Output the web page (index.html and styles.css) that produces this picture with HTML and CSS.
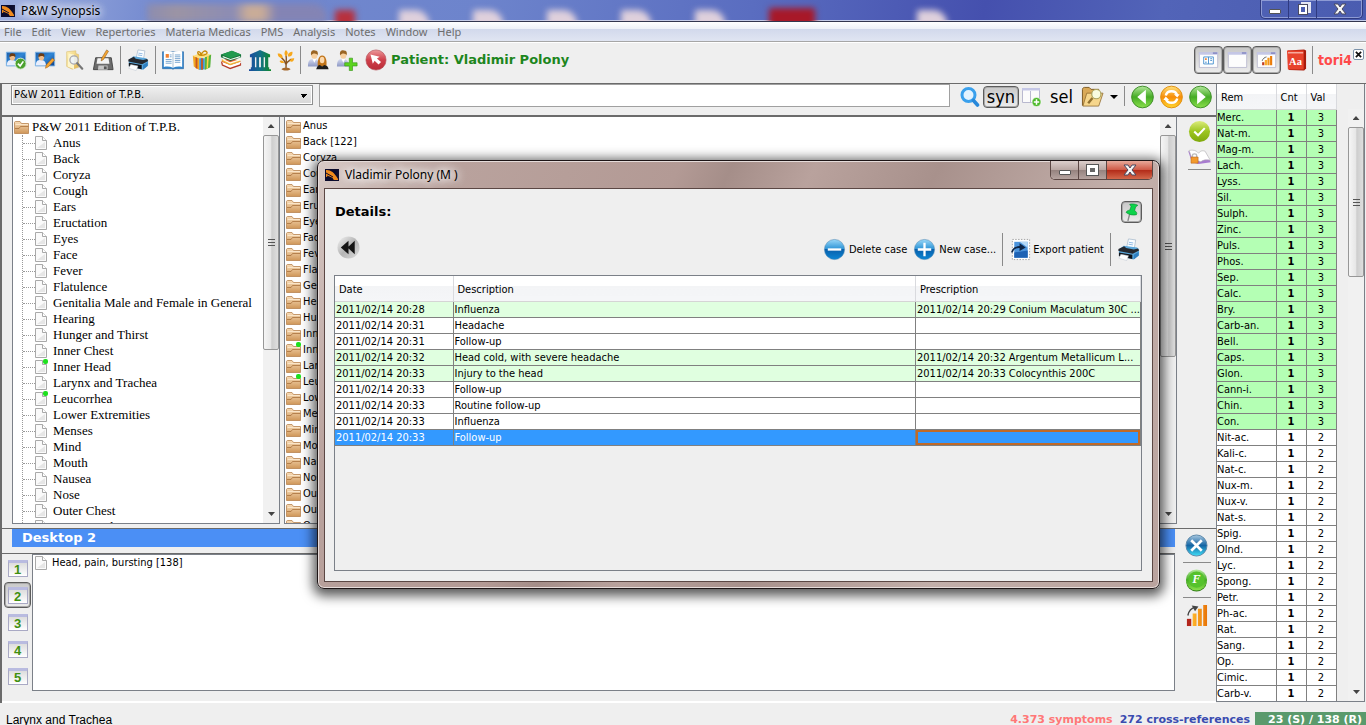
FILE: index.html
```html
<!DOCTYPE html>
<html lang="en">
<head>
  <meta charset="UTF-8">
  <meta name="viewport" content="width=device-width, initial-scale=1.0">
  <title>P&amp;W Synopsis</title>
  <link rel="stylesheet" href="styles.css">
</head>
<body>
  <svg class="sprite" aria-hidden="true">
    <defs>
      <linearGradient id="gScreen" x1="0" y1="0" x2="1" y2="1"><stop offset="0" stop-color="#1d5ea8"/><stop offset=".5" stop-color="#2f86d6"/><stop offset="1" stop-color="#0f3f86"/></linearGradient>
      <linearGradient id="gFolder" x1="0" y1="0" x2="0" y2="1"><stop offset="0" stop-color="#f7dcb8"/><stop offset="1" stop-color="#cf9658"/></linearGradient>
      <linearGradient id="gYellow" x1="0" y1="0" x2="1" y2="1"><stop offset="0" stop-color="#fff3b8"/><stop offset="1" stop-color="#e3b650"/></linearGradient>
      <linearGradient id="gGreen" x1="0" y1="0" x2="0" y2="1"><stop offset="0" stop-color="#b4e89c"/><stop offset=".5" stop-color="#45ac25"/><stop offset="1" stop-color="#8be04c"/></linearGradient>
      <linearGradient id="gLime" x1="0" y1="0" x2="0" y2="1"><stop offset="0" stop-color="#dcec7c"/><stop offset=".5" stop-color="#9cc520"/><stop offset="1" stop-color="#7fa80c"/></linearGradient>
      <linearGradient id="gOrange" x1="0" y1="0" x2="0" y2="1"><stop offset="0" stop-color="#ffe27a"/><stop offset=".5" stop-color="#f78d08"/><stop offset="1" stop-color="#ffd630"/></linearGradient>
      <linearGradient id="gBlue" x1="0" y1="0" x2="0" y2="1"><stop offset="0" stop-color="#9ad8f8"/><stop offset=".48" stop-color="#2b93d6"/><stop offset=".5" stop-color="#0960ac"/><stop offset="1" stop-color="#0b86d4"/></linearGradient>
      <linearGradient id="gBlueX" x1="0" y1="0" x2="0" y2="1"><stop offset="0" stop-color="#a8c8e0"/><stop offset=".5" stop-color="#1565a4"/><stop offset="1" stop-color="#3fe0f8"/></linearGradient>
      <linearGradient id="gRed" x1="0" y1="0" x2="0" y2="1"><stop offset="0" stop-color="#ec9a9c"/><stop offset=".5" stop-color="#cf3f4a"/><stop offset="1" stop-color="#b92c38"/></linearGradient>
      <linearGradient id="gMuseum" x1="0" y1="0" x2="1" y2="0"><stop offset="0" stop-color="#1a4aa0"/><stop offset=".5" stop-color="#13708a"/><stop offset="1" stop-color="#118a28"/></linearGradient>
      <linearGradient id="gBars" x1="0" y1="0" x2="1" y2="0"><stop offset="0" stop-color="#ffb52a"/><stop offset="1" stop-color="#e87408"/></linearGradient>
      <linearGradient id="gShirt" x1="0" y1="0" x2="0" y2="1"><stop offset="0" stop-color="#d4daf0"/><stop offset="1" stop-color="#8d98c4"/></linearGradient>
      <linearGradient id="gSilver" x1="0" y1="0" x2="1" y2="1"><stop offset="0" stop-color="#f4f4f4"/><stop offset=".5" stop-color="#b4b4b4"/><stop offset="1" stop-color="#dedede"/></linearGradient>
    </defs>

    <symbol id="i-app" viewBox="0 0 14 12"><path fill="#0b0b2c" d="M0 0h14v12H0z"/><path fill="#f08a1c" d="M1 1c4-.5 8 2 12 9v1H9C6 7 4 7 1 8z"/><path stroke="#0b0b2c" fill="none" d="M1 4l7 4M2 7l6 3"/></symbol>

    <symbol id="i-patient" viewBox="0 0 24 24"><path fill="url(#gScreen)" stroke="#7db4e6" d="M1.500 3.500h21v15h-21z"/><path fill="#e8eefc" d="M2 18c0-5 2-6 5-6s6 1 6 6z"/><ellipse cx="8" cy="9" rx="3" ry="3.500" fill="#f0bd8c"/><path fill="#6d3c12" d="M5 9c-1-4 2-5 4-4 2-.5 3 2 2 4-1-2-4-2-6 0z"/></symbol>
    <symbol id="i-patient-ok" viewBox="0 0 24 24"><use href="#i-patient"/><circle cx="17" cy="16" r="6" fill="#4ba12e" stroke="#dff0d8"/><path d="M14 16l2.500 2.500L20 13.500" fill="none" stroke="#fff" stroke-width="1.800"/></symbol>
    <symbol id="i-patient-edit" viewBox="0 0 24 24"><use href="#i-patient"/><path fill="#f5a531" stroke="#a4601a" stroke-width=".6" d="M20 10l2.500 2-7 7.500-3 1.500.8-3.500z"/></symbol>
    <symbol id="i-find" viewBox="0 0 24 24"><path fill="url(#gYellow)" stroke="#d9bb6b" stroke-width=".6" d="M4 3l10-1v3l3 1v14l-7 2-6-3z"/><path fill="#fdf6cf" d="M6 5l6 1v16l-7-3z"/><circle cx="12" cy="12" r="4.500" fill="#eaf4ff" fill-opacity=".8" stroke="#a6a6ae" stroke-width="1.400"/><path d="M15.500 15.500L21 21.500" stroke="#777" stroke-width="2.400" stroke-linecap="round"/></symbol>
    <symbol id="i-save" viewBox="0 0 24 24"><path fill="#6c6c6c" stroke="#444" d="M4 9.500h17l2 13H1.500z"/><path fill="#f4f4f4" d="M6 10h12l1 6H5z"/><path fill="#c7c7c7" d="M7 18h10v4.500H6.500z"/><path fill="#555" d="M13 19h3v3h-3z"/><path fill="#f5a531" stroke="#8a5618" stroke-width=".6" d="M16 1l2 1.500-5.500 9-2.500 1.500.5-3z"/></symbol>
    <symbol id="i-print" viewBox="0 0 24 24"><path fill="#fafdff" stroke="#9db2c8" stroke-width=".7" d="M12 1l7.500 1-1.500 9-8-1z"/><path stroke="#8fb9e4" d="M12.500 4.500l4.500.7M12 6.500l4.500.7"/><path fill="#5aa6da" d="M2 12l5-4 14 2 2 2v6l-6 4.500-15-4z"/><path fill="#25282e" d="M1.500 11.500l6-3 2 2 8 1.500 4.500-1 1 2-6.500 3.500-15-3z"/><path fill="#101318" d="M2 15l14 2.500v4.500L2 19z"/><path fill="#fff" stroke="#b7c2cf" stroke-width=".5" d="M4 17l8 1.500-2 5-8-2.500z"/><path fill="#2f7fc0" d="M17.500 17.500l5-3v4l-5 4z"/></symbol>
    <symbol id="i-book" viewBox="0 0 24 24"><path fill="#2f84cc" stroke="#1f5c9c" stroke-width=".6" d="M.5 3h23v18.500H13l-1 .8-1-.8H.5z"/><path fill="#fff" d="M2 2.500c4-.8 7-.5 10 .8 3-1.300 6-1.600 10-.8v17c-4-.6-7-.3-10 1-3-1.300-6-1.600-10-1z"/><path stroke="#9fb9d0" d="M12 4v16"/><path fill="#f08030" d="M4 5.500h3.500v4H4z"/><path stroke="#6f9fcc" d="M8.500 6.500h2M8.500 8.500h2M4 11.500h6.500M4 13.500h6.500M4 15.500h6.500M14 6.500h6M14 8.500h6M14 10.500h6M14 12.500h6M14 14.500h6"/></symbol>
    <symbol id="i-gift" viewBox="0 0 24 24"><path fill="#f2a823" d="M2 7l7 3v13l-6-4z"/><path fill="#3e95dc" d="M9 10h6v12l-6 1z"/><path fill="#58b33c" d="M15 9l7-3-1 14-6 3z"/><path fill="#c9551c" d="M5 8.500l2 .8v12.500l-2-1.200zM11 10h2v12.500h-2z"/><path fill="#ffd24a" d="M17.500 8l2-.9-1 14-1.500.8z"/><path fill="#ffe07e" d="M2 7.500L11 4l11 2-7 3-6 1z"/><path fill="none" stroke="#c98a0a" stroke-width="1.500" d="M11 7C6 6 7 2 9 3s2 3 2 4c1-4 4-6 6-4s-2 4-6 4z"/></symbol>
    <symbol id="i-books" viewBox="0 0 24 24"><path fill="#b63a26" d="M1 14l10 5 12-4v3L11 22 2 18z"/><path fill="#fff" d="M3 14l8 4 11-3.500v2L11 20.500 3 17z"/><path fill="#dc5a34" d="M1 13.500L11 9l12 4.500-12 4z"/><path fill="#f0b335" d="M2 11l9 4.500L22 12v2l-11 3.800L2 13z"/><path fill="#fffbe6" d="M3 10.500l8 4L22 11v1.500l-11 3.500-8-4z"/><path fill="#17713a" d="M1 6l12-4 10 4v3l-11.500 4L1 9z"/><path fill="#f3fff5" d="M3 7.500l8.500 3.500L22 7.500V9l-10.500 3L3 9z"/><path fill="#219a4e" d="M2 6l11-4 10 4-11.500 4z"/></symbol>
    <symbol id="i-museum" viewBox="0 0 24 24"><path fill="url(#gMuseum)" d="M12 1l11 5v3H1V6zM3 9h3.500v11H3zM8 9h3v11H8zM13 9h3v11h-3zM17.500 9H21v11h-3.500zM2 20h20v2H2zM0 22h24v2H0z"/></symbol>
    <symbol id="i-plant" viewBox="0 0 18 24"><path fill="none" stroke="#87521d" stroke-width="1.500" d="M9 21C9 15 10 11 9 7M9 17C8 12 6 11 3.500 9M9 17c1-3 3-4 6-6"/><path fill="#f7a81c" d="M9 8C6 5 8 2 9 1c2 2 3 4 0 7zM5 10C1 10 0 7 0 5c4 0 6 2 5 5zM11 8c0-4 3-5 5-5 .5 3-1 6-5 5zM13 13c1-3 3-3 5-3-.5 3-2 5-5 3zM7 15c-3 1-4 0-5-2 3-1 4 0 5 2z"/><path fill="#a5682c" d="M4 22c2-2 8-2 10 0-2 2-8 2-10 0z"/></symbol>
    <symbol id="i-man" viewBox="0 0 24 24"><path fill="url(#gShirt)" d="M1 19c0-6 2-8 6-8s7 2 7 8z"/><path fill="#fff" d="M6 11h4l-2 4z"/><ellipse cx="8" cy="6.500" rx="3.300" ry="4.200" fill="#f7cf9e"/><path fill="#9a6524" d="M4.500 7c-1-5 2-6 4-5.500 3 0 4 2 3 5.500-1-2.500-5-3-7 0z"/></symbol>
    <symbol id="i-people" viewBox="0 0 24 24"><use href="#i-man"/><path fill="#c07318" d="M12 19c-1-4 0-12 4.500-12S22 14 21 19z"/><ellipse cx="16.500" cy="12" rx="2.500" ry="3.500" fill="#fbd8ac"/><path fill="#1c1c1c" d="M10 22c1-3.500 3-4.500 4-4.500l2.500 1.500 2.500-1.500c2 .5 4 1 4.500 4.500z"/></symbol>
    <symbol id="i-adduser" viewBox="0 0 24 24"><use href="#i-man"/><path fill="#5cd41f" stroke="#38961a" stroke-width=".7" d="M14.500 10h3.500v5h5v3.500h-5V23.500h-3.500v-5h-5V15h5z"/></symbol>
    <symbol id="i-cursor" viewBox="0 0 24 24"><circle cx="12" cy="12" r="11" fill="url(#gRed)" stroke="#b45058" stroke-width=".7"/><path fill="#fff" d="M6 6l10 2.500-3 1.800 4.500 4-2.700 2.700-4.300-4.300L8.500 16z"/></symbol>

    <symbol id="i-win" viewBox="0 0 24 20"><path fill="#fdfdfd" stroke="#b9b9cf" d="M1.500 1.500h21v17h-21z"/><path fill="#c5c7e6" d="M1 1h22v3H1z"/><path fill="#8d90c6" d="M17 1h5v2h-5z"/></symbol>
    <symbol id="i-win-book" viewBox="0 0 24 20"><use href="#i-win"/><path fill="#fff" stroke="#3f8ccc" d="M6.500 6.500h11v8h-11zM12 6.500v8"/><path fill="#f08030" d="M8 8h2v2H8z"/><path stroke="#3f8ccc" d="M14 8.500h2M14 10.500h2M8 12.500h2"/></symbol>
    <symbol id="i-win-bars" viewBox="0 0 24 20"><use href="#i-win"/><path fill="url(#gBars)" d="M10 10h2.500v6H10zM13 7.500h2.500V16H13zM16 5.500h2.500V16H16z"/><path fill="#c03c22" d="M7 12.500h2.500V16H7z"/><path fill="none" stroke="#555" d="M7 11c1-3 3-4 5-4.500"/></symbol>

    <symbol id="i-search" viewBox="0 0 20 20"><circle cx="8.500" cy="8" r="6.500" fill="#e3f3ff" stroke="#3aa0ec" stroke-width="3"/><path d="M13.500 13.500l4 4.500" stroke="#2788da" stroke-width="3.600" stroke-linecap="round"/></symbol>
    <symbol id="i-win-add" viewBox="0 0 20 20"><path fill="#fbfbfb" stroke="#b9b9cf" d="M.5 1.500h17v14H.500z"/><path fill="#c5c7e6" d="M0 1h18v2.500H0z"/><path stroke="#b9b9cf" d="M8.500 4v11"/><circle cx="14.500" cy="15" r="4.500" fill="#4cb829" stroke="#fff" stroke-width=".6"/><path stroke="#fff" stroke-width="1.500" d="M14.500 12.300v5.400M11.800 15h5.400"/></symbol>
    <symbol id="i-folder-find" viewBox="0 0 24 22"><path fill="#d9a958" stroke="#7c5a22" d="M1.500 20V3c0-1 1-2 2-2h5l2 2h8v4"/><path fill="#f6d68c" stroke="#8d692c" stroke-width=".8" d="M2 20.500L6 7h17l-4.500 13.500z"/><circle cx="16" cy="8" r="4.800" fill="#f8fbe0" stroke="#a8a25e" stroke-width="1.200"/><path stroke="#907030" stroke-width="2.500" d="M12 12l-4.500 5.500"/></symbol>
    <symbol id="i-prev" viewBox="0 0 24 24"><circle cx="12" cy="12" r="11.300" fill="url(#gGreen)" stroke="#3f8d2a"/><path fill="#fff" d="M15.500 4.500v15L6.500 12z"/></symbol>
    <symbol id="i-next" viewBox="0 0 24 24"><circle cx="12" cy="12" r="11.300" fill="url(#gGreen)" stroke="#3f8d2a"/><path fill="#fff" d="M8.500 4.500v15l9-7.500z"/></symbol>
    <symbol id="i-reload" viewBox="0 0 24 24"><circle cx="12" cy="12" r="11.300" fill="url(#gOrange)" stroke="#e08e10"/><path fill="none" stroke="#fff" stroke-width="2.600" d="M6 10.500c1.500-6 10.500-6 12 0M18 13.500c-1.500 6-10.500 6-12 0"/><path fill="#fff" d="M14.500 9h6L18 12.500zM9.500 15h-6L6 11.500z"/></symbol>

    <symbol id="i-accept" viewBox="0 0 24 24"><circle cx="12" cy="12" r="11" fill="url(#gLime)"/><path d="M6.500 12l4 4 7-7.500" fill="none" stroke="#fff" stroke-width="2.200"/></symbol>
    <symbol id="i-locked" viewBox="0 0 24 18"><path fill="#a87bd0" d="M0 2l11 4 7-3 6 11-13 2-7-2z"/><path fill="#fff" stroke="#aaa" stroke-width=".6" d="M1 1.500c4-1 8 0 10 3 2-3 5-3 7-2l5.500 9.500c-4-1-8-.5-10 1.500-3-1-7-2-9-2z"/><path fill="none" stroke="#bbb" stroke-width="1.500" d="M4.500 9V7c0-2.500 4.500-2.500 4.500 0v2"/><path fill="#f39a2c" stroke="#b5641a" stroke-width=".6" d="M3 8.500h7.500V15H3z"/></symbol>
    <symbol id="i-cancel" viewBox="0 0 24 24"><circle cx="12" cy="12" r="11" fill="url(#gBlueX)" stroke="#5b87a8"/><path d="M6.500 6.500l11 11M17.500 6.500l-11 11" stroke="#fff" stroke-width="2.800"/></symbol>
    <symbol id="i-bars" viewBox="0 0 24 24"><path fill="url(#gBars)" d="M8 10h4v13H8zM13.500 5h4v18h-4zM19 1h4v22h-4z"/><path fill="#b3261c" d="M2 15.500h4.500V23H2z"/><path fill="none" stroke="#444" stroke-width="1.500" d="M3 12c1-5 4-8 8-8.500"/><path fill="#444" d="M7 1.500l7 1-3.500 5z"/></symbol>

    <symbol id="i-folder" viewBox="0 0 15 13"><path fill="url(#gFolder)" stroke="#b98450" stroke-width=".8" d="M.5 12V1.500C.5 1 1 .5 1.500.5H6L7.500 2.500H14.500V12.500H.5z"/><path fill="none" stroke="#a9713c" stroke-width=".8" d="M1 7.500h4l1.500-2h8"/><path fill="none" stroke="#fff0da" stroke-width=".7" d="M1.500 3.500h12.500"/></symbol>
    <symbol id="i-page" viewBox="0 0 12 14"><path fill="#fafafa" stroke="#a9a9a9" d="M.5.5h7l4 4v9H.5z"/><path fill="#e6e6e6" d="M2 12l8-6v6z"/><path fill="#fff" stroke="#a9a9a9" d="M7.500.5v4h4"/></symbol>

    <symbol id="i-rewind" viewBox="0 0 24 24"><circle cx="12" cy="12" r="11.500" fill="url(#gSilver)"/><path fill="#151515" d="M12 5v14l-8-7zM18.500 5v14L11 12z"/></symbol>
    <symbol id="i-minus" viewBox="0 0 24 24"><circle cx="12" cy="12" r="10.500" fill="url(#gBlue)" stroke="#4e88b4" stroke-width=".6"/><path stroke="#fff" stroke-width="2.400" d="M5 12h14"/></symbol>
    <symbol id="i-plus" viewBox="0 0 24 24"><circle cx="12" cy="12" r="10.500" fill="url(#gBlue)" stroke="#4e88b4" stroke-width=".6"/><path stroke="#fff" stroke-width="2.400" d="M5 12h14M12 5v14"/></symbol>
    <symbol id="i-export" viewBox="0 0 22 24"><path fill="#fff" stroke="#a2a2a2" stroke-dasharray="1.500 1.500" d="M2.500 1.500h18v21h-18z"/><path fill="#4c94dc" d="M4.500 4h14v16.500h-14z"/><path fill="#b4d8f6" d="M10 4h8.500v6z"/><path fill="#1e62b4" d="M4.500 15l14-2v7.500h-14z"/><path fill="none" stroke="#0e2546" stroke-width="2" d="M2 15c1-4 5-6 9-5.500"/><path fill="#0e2546" d="M10 5.500l6.500 4.500-6.500 3.500z"/></symbol>
    <symbol id="i-pin" viewBox="0 0 18 20"><path d="M7 12L5 20" stroke="#888" stroke-width="1.500"/><path fill="#0bd34a" stroke="#078b2f" stroke-width=".7" d="M7 1.500C9 .5 13 1 16 2.500l-2.500 2-1 4c2 1 3 3 2 4.500C11 14 6 13 3 10.500c0-1 2-2.500 4-2.500l1.500-4z"/></symbol>
  </svg>

  <header class="titlebar">
    <svg class="app-icon"><use href="#i-app"/></svg>
    <span class="title-text">P&amp;W Synopsis</span>
    <div class="blobs" aria-hidden="true">
      <i class="blob-folder"></i><i class="blob-red"></i><i></i><i></i><i></i><i></i><i></i><i class="blob-red wide"></i><i class="last"></i>
    </div>
    <div class="caption main-caption">
      <button aria-label="Minimize"><i class="cap-min"></i></button>
      <button aria-label="Restore"><i class="cap-restore"></i></button>
      <button class="cap-close" aria-label="Close"><svg viewBox="0 0 12 10"><path d="M0 0h4l2 3 2-3h4L8 5l4 5H8L6 7l-2 3H0l4-5z"/></svg></button>
    </div>
  </header>

  <nav class="menubar">
    <a href="#">File</a><a href="#">Edit</a><a href="#">View</a><a href="#">Repertories</a><a href="#">Materia Medicas</a><a href="#">PMS</a><a href="#">Analysis</a><a href="#">Notes</a><a href="#">Window</a><a href="#">Help</a>
  </nav>

  <div class="toolbar">
    <button aria-label="Open patient"><svg><use href="#i-patient-ok"/></svg></button>
    <button aria-label="Edit patient"><svg><use href="#i-patient-edit"/></svg></button>
    <button aria-label="Find"><svg><use href="#i-find"/></svg></button>
    <button aria-label="Save"><svg><use href="#i-save"/></svg></button>
    <i class="sep"></i>
    <button aria-label="Print"><svg><use href="#i-print"/></svg></button>
    <i class="sep"></i>
    <button aria-label="Repertory"><svg><use href="#i-book"/></svg></button>
    <button aria-label="Packages"><svg><use href="#i-gift"/></svg></button>
    <button aria-label="Books"><svg><use href="#i-books"/></svg></button>
    <button aria-label="Library"><svg><use href="#i-museum"/></svg></button>
    <button class="slim" aria-label="Families"><svg><use href="#i-plant"/></svg></button>
    <i class="sep"></i>
    <button aria-label="Patients"><svg><use href="#i-people"/></svg></button>
    <button aria-label="Add patient"><svg><use href="#i-adduser"/></svg></button>
    <button aria-label="Select patient"><svg><use href="#i-cursor"/></svg></button>
    <strong class="patient">Patient: Vladimir Polony</strong>
    <div class="toggles">
      <button class="pressed" aria-label="Show repertory"><svg><use href="#i-win-book"/></svg></button>
      <button class="pressed" aria-label="Show desktop"><svg><use href="#i-win"/></svg></button>
      <button class="pressed" aria-label="Show analysis"><svg><use href="#i-win-bars"/></svg></button>
    </div>
    <button class="dict" aria-label="Dictionary"><svg viewBox="0 0 22 24"><path fill="#a81c0c" d="M2 2l17-1 2 1v19l-2 2-16-.5z"/><path fill="#e8432c" d="M1 2h17.500v20L2 22z"/><path stroke="#ffe3dc" d="M2 4.500h16"/><text x="10" y="17">Aa</text></svg></button>
    <i class="sep"></i>
    <span class="user">tori4</span>
    <button class="tiny-close" aria-label="Close panel"><svg viewBox="0 0 8 8"><path d="M1 1l6 6M7 1L1 7"/></svg></button>
  </div>

  <main class="work">
    <section class="left">
      <form class="searchbar">
        <select aria-label="Repertory edition"><option>P&amp;W 2011 Edition of T.P.B.</option></select>
        <input type="text" aria-label="Search">
        <button type="button" class="ic-search" aria-label="Search"><svg><use href="#i-search"/></svg></button>
        <button type="button" class="word pressed">syn</button>
        <button type="button" class="ic-search" aria-label="Add window"><svg><use href="#i-win-add"/></svg></button>
        <button type="button" class="word">sel</button>
        <button type="button" class="ic-nav" aria-label="Search folder"><svg><use href="#i-folder-find"/></svg></button>
        <button type="button" class="drop" aria-label="More"></button>
        <i class="sep"></i>
        <button type="button" class="ic-nav" aria-label="Back"><svg><use href="#i-prev"/></svg></button>
        <button type="button" class="ic-nav" aria-label="Reload"><svg><use href="#i-reload"/></svg></button>
        <button type="button" class="ic-nav" aria-label="Forward"><svg><use href="#i-next"/></svg></button>
      </form>

      <div class="upper">
        <div class="pane tree-pane">
          <div class="tree">
            <div class="root"><svg class="folder"><use href="#i-folder"/></svg>P&amp;W 2011 Edition of T.P.B.</div>
            <ul id="tree"></ul>
          </div>
          <div class="scroll"><i class="up"></i><div class="track"><div class="thumb tree-thumb"><i class="grip"></i></div></div><i class="down"></i></div>
        </div>
        <div class="pane list-pane">
          <ul id="chapters"></ul>
          <div class="scroll"><i class="up"></i><div class="track"><div class="thumb list-thumb"><i class="grip"></i></div></div><i class="down"></i></div>
        </div>
        <div class="side">
          <button aria-label="Accept"><svg><use href="#i-accept"/></svg></button>
          <button class="short" aria-label="Locked"><svg><use href="#i-locked"/></svg></button>
          <hr>
        </div>
      </div>

      <div class="lower">
        <div class="desk">
          <h2>Desktop 2</h2>
          <div class="desk-body">
            <div class="desk-tabs">
              <button><span>1</span></button>
              <button class="pressed"><span>2</span></button>
              <button><span>3</span></button>
              <button><span>4</span></button>
              <button><span>5</span></button>
            </div>
            <div class="desk-list"><div><svg class="page"><use href="#i-page"/></svg>Head, pain, bursting [138]</div></div>
          </div>
        </div>
        <div class="side side-low">
          <button aria-label="Remove"><svg><use href="#i-cancel"/></svg></button>
          <hr>
          <button class="filter" aria-label="Filter"><svg viewBox="0 0 24 24"><ellipse cx="12" cy="14" rx="10.500" ry="9.500" fill="#2f7a16"/><circle cx="12" cy="11.500" r="11" fill="url(#gGreen)"/><circle cx="12" cy="11" r="8.500" fill="#56c22c"/><text x="12" y="15">F</text></svg></button>
          <hr>
          <button aria-label="Analyse"><svg><use href="#i-bars"/></svg></button>
        </div>
      </div>
    </section>

    <aside class="remedies">
      <div class="rem-scroll">
        <table class="rem-table">
          <thead><tr><th class="c-rem">Rem</th><th>Cnt</th><th>Val</th></tr></thead>
          <tbody id="remedies"></tbody>
        </table>
      </div>
      <div class="scroll"><i class="up"></i><div class="track"><div class="thumb rem-thumb"><i class="grip"></i></div></div><i class="down"></i></div>
    </aside>
  </main>

  <footer class="status">
    <span class="st-left">Larynx and Trachea</span>
    <b class="st-sym">4.373 symptoms</b>
    <b class="st-cross">272 cross-references</b>
    <b class="st-count">23 (S) / 138 (R)</b>
  </footer>

  <div class="dialog" role="dialog" aria-label="Vladimir Polony (M )">
    <div class="dialog-title">
      <svg class="app-icon"><use href="#i-app"/></svg>
      <span class="title-text">Vladimir Polony (M )</span>
      <div class="caption dialog-caption">
        <button aria-label="Minimize"><i class="cap-min"></i></button>
        <button aria-label="Maximize"><i class="cap-max"></i></button>
        <button class="cap-close" aria-label="Close"><svg viewBox="0 0 12 10"><path d="M0 0h4l2 3 2-3h4L8 5l4 5H8L6 7l-2 3H0l4-5z"/></svg></button>
      </div>
    </div>
    <div class="dialog-body">
      <div class="details">
        <h3>Details:</h3>
        <button class="pressed pin" aria-label="Pin"><svg><use href="#i-pin"/></svg></button>
      </div>
      <div class="case-tools">
        <button class="rewind" aria-label="Collapse"><svg><use href="#i-rewind"/></svg></button>
        <button><svg><use href="#i-minus"/></svg>Delete case</button>
        <button><svg><use href="#i-plus"/></svg>New case...</button>
        <i class="sep"></i>
        <button class="export"><svg><use href="#i-export"/></svg>Export patient</button>
        <i class="sep"></i>
        <button aria-label="Print"><svg><use href="#i-print"/></svg></button>
      </div>
      <div class="cases">
        <table>
          <thead><tr><th class="c-date">Date</th><th>Description</th><th class="c-presc">Prescription</th></tr></thead>
          <tbody>
            <tr class="hit"><td>2011/02/14 20:28</td><td>Influenza</td><td>2011/02/14 20:29 Conium Maculatum 30C ...</td></tr>
            <tr><td>2011/02/14 20:31</td><td>Headache</td><td></td></tr>
            <tr><td>2011/02/14 20:31</td><td>Follow-up</td><td></td></tr>
            <tr class="hit"><td>2011/02/14 20:32</td><td>Head cold, with severe headache</td><td>2011/02/14 20:32 Argentum Metallicum L...</td></tr>
            <tr class="hit"><td>2011/02/14 20:33</td><td>Injury to the head</td><td>2011/02/14 20:33 Colocynthis 200C</td></tr>
            <tr><td>2011/02/14 20:33</td><td>Follow-up</td><td></td></tr>
            <tr><td>2011/02/14 20:33</td><td>Routine follow-up</td><td></td></tr>
            <tr><td>2011/02/14 20:33</td><td>Influenza</td><td></td></tr>
            <tr class="selected"><td>2011/02/14 20:33</td><td>Follow-up</td><td class="focus"></td></tr>
          </tbody>
        </table>
      </div>
    </div>
  </div>

  <script src="script.js"></script>
</body>
</html>
```
FILE: styles.css
```css
* { box-sizing: border-box; }
body {
  margin: 0;
  height: 100vh;
  display: flex;
  flex-direction: column;
  overflow: hidden;
  position: relative;
  background: #efefef;
  color: #000;
  font: 11px/16px "DejaVu Sans Condensed", Tahoma, sans-serif;
}
button {
  border: 0;
  padding: 0;
  background: none;
  font: inherit;
  color: inherit;
}
ul { list-style: none; margin: 0; padding: 0; }
.sprite { position: absolute; width: 0; height: 0; }
.sep { width: 1px; background: #8a8a8a; }
.pressed {
  border: 1px solid #5c5c5c;
  border-radius: 4px;
  background: linear-gradient(#c8c8c8, #ececec);
  box-shadow: inset 0 0 0 1px #aaa;
}

/* title bar */
.titlebar {
  position: relative;
  flex: none;
  height: 22px;
  display: flex;
  align-items: center;
  padding-left: 1px;
  background: linear-gradient(100deg, #9fb0e0 0, #7389cf 12%, #6d84cc 35%, #5a6dc0 55%, #4550ae 72%, #5264b8 85%, #4a5cb0 100%);
  border-bottom: 1px solid #33364f;
  box-shadow: inset 0 -1px #c3cbe8;
  overflow: hidden;
}
.app-icon { width: 14px; height: 12px; flex: none; }
.title-text {
  font: 12px/20px "Noto Sans", "Segoe UI", sans-serif;
  margin-left: 6px;
  position: relative;
  z-index: 1;
  text-shadow: 0 0 8px #fff, 0 0 8px #fff, 0 0 12px #fff;
}
.blobs {
  position: absolute;
  inset: 10px 0 1px 147px;
  display: flex;
  gap: 44px;
  filter: blur(3px);
}
.blobs i { flex: none; width: 30px; height: 18px; background: #dfd0dc; border-radius: 2px 14px 0 0; }
.blobs .blob-folder { width: 180px; margin: -6px -36px 0 0; background: linear-gradient(90deg, #8c8cb0, #9c94a4 16%, #8c8cb4 48%, #c9ac98 56%, #c9ac98 64%, #8484b4 72%); }
.blobs .blob-red { width: 20px; background: #b8303c; border-radius: 2px; }
.blobs .wide { width: 46px; height: 20px; margin-top: -2px; background: #a81828; }
.blobs .last { margin-left: 58px; }
.caption { display: flex; margin-left: auto; align-self: flex-start; }
.caption button {
  display: flex;
  align-items: center;
  justify-content: center;
  border-right: 1px solid #2f3a80;
}
.caption svg { width: 12px; height: 10px; fill: #f8f8f8; stroke: #4a4a60; stroke-width: 1; overflow: visible; }
.main-caption {
  height: 19px;
  width: 103px;
  margin-right: 3px;
  border: 1px solid #2f3a80;
  border-top: 0;
  border-radius: 0 0 5px 5px;
  box-shadow: inset 0 0 0 1px #8d9ad4;
  z-index: 1;
}
.main-caption button { width: 28px; }
.caption .cap-close { flex: 1; border-right: 0; }
.cap-min { width: 12px; height: 5px; background: #fff; border: 1px solid #555; border-radius: 1px; margin-top: 4px; }
.cap-max { width: 11px; height: 10px; border: 3px solid #fff; outline: 1px solid #555; background: #666; }
.cap-restore {
  width: 8px;
  height: 9px;
  border: 2px solid #fff;
  outline: 1px solid #4a4a60;
  box-shadow: 3px -2px 0 1px #e4e6f4;
}

/* menu */
.menubar {
  flex: none;
  height: 20px;
  display: flex;
  gap: 10px;
  padding-left: 4px;
  background: linear-gradient(#fff, #eef1f8 35%, #d2d9ec 38%, #e0e5f2);
  border-bottom: 1px solid #a6a6a6;
}
.menubar a {
  color: #6d6d6d;
  text-decoration: none;
  font: 11px/19px "Noto Sans", "Segoe UI", sans-serif;
}

/* toolbar */
.toolbar {
  flex: none;
  height: 42px;
  display: flex;
  align-items: center;
  gap: 5px;
  padding: 0 2px 7px 4px;
  border-top: 1px solid #fff;
  border-bottom: 1px solid #6b6b6b;
}
.toolbar button { width: 24px; height: 24px; flex: none; }
.toolbar button svg { display: block; width: 100%; height: 100%; padding: 1px; }
.toolbar .slim { width: 18px; }
.toolbar .slim svg { padding: 1px 0; }
.toolbar .sep { height: 28px; flex: none; }
.patient { font: bold 13px/16px "DejaVu Sans", Verdana, sans-serif; color: #1d861d; margin-left: -2px; }
.toggles { display: flex; margin-left: auto; }
.toolbar .toggles button { width: 29px; height: 28px; }
.toolbar .toggles svg { padding: 3px; }
.toolbar .dict { width: 21px; }
.toolbar .dict svg { padding: 0; }
.dict text, .filter text { fill: #fff; text-anchor: middle; font: bold 11px "Liberation Serif", serif; }
.filter text { font-size: 13px; font-style: italic; }
.user { font: bold 14px/16px "DejaVu Sans Condensed", Tahoma, sans-serif; color: #ff4a4a; }
.toolbar .tiny-close { width: 11px; height: 11px; border: 1px solid #7c93aa; border-radius: 2px; background: #fff; align-self: flex-start; margin: 6px 0 0 -4px; }
.tiny-close path { stroke: #111; stroke-width: 2; }

/* work area */
.work { flex: 1; min-height: 0; display: flex; }
.left { flex: 1; min-width: 0; display: flex; flex-direction: column; border-left: 2px solid #6b6b6b; }
.searchbar {
  flex: none;
  height: 33px;
  display: flex;
  align-items: flex-start;
  padding: 0 4px 0 9px;
  gap: 6px;
  border-bottom: 2px solid #6b6b6b;
}
.searchbar select {
  appearance: none;
  width: 302px;
  height: 20px;
  margin-top: 1px;
  padding: 0 2px;
  border: 1px solid #8e8f8f;
  border-radius: 0;
  box-shadow: inset 0 0 0 1px #fff;
  background:
    linear-gradient(to top right, transparent 50%, #000 50%) 288px 8px / 4px 4px no-repeat,
    linear-gradient(to top left, transparent 50%, #000 50%) 292px 8px / 4px 4px no-repeat,
    linear-gradient(#f0f0f0, #d6d6d6);
  font: inherit;
  color: #000;
}
.searchbar input {
  flex: 1;
  min-width: 0;
  height: 23px;
  margin-right: 4px;
  border: 1px solid #a0a0a0;
  background: #fff;
  font: inherit;
}
.searchbar button { flex: none; height: 24px; margin-top: 1px; }
.searchbar button svg { display: block; width: 100%; height: 100%; }
.ic-search { width: 20px; }
.ic-nav { width: 23px; }
.searchbar .word { font-size: 18px; line-height: 18px; padding: 0 2px; }
.searchbar .word.pressed { height: 22px; margin: 2px -3px 0; padding: 0 3px; }
.searchbar .drop { width: 8px; height: 4px; margin-top: 11px; background: #000; clip-path: polygon(0 0, 100% 0, 50% 100%); }
.searchbar .sep { height: 20px; margin-top: 2px; }

/* panes */
.upper { flex: 412 0 0; min-height: 0; display: flex; padding: 0 0 4px 10px; gap: 4px; }
.pane { display: flex; background: #fff; border: 1px solid #7b8088; border-top: 0; overflow: hidden; }
.tree-pane { width: 268px; flex: none; }
.list-pane { flex: 1; min-width: 0; }
.tree { flex: 1; min-width: 0; overflow: hidden; padding: 2px 0 0 1px; font: 13px/16px "Liberation Serif", "Times New Roman", serif; }
.root, .tree li, .list-pane li, .desk-list div { display: flex; align-items: center; height: 16px; white-space: nowrap; position: relative; }
.folder { width: 15px; height: 13px; margin-right: 3px; flex: none; }
.page { width: 12px; height: 14px; margin-right: 5px; flex: none; }
.tree ul { margin-left: 8px; border-left: 1px dotted #999; }
.tree li::before { content: ""; width: 12px; border-top: 1px dotted #999; }
.tree li .page { margin-right: 6px; }
.list-pane ul { flex: 1; overflow: hidden; padding: 1px 0 0 1px; }
.list-pane .folder { margin-right: 2px; }
.mark::after { content: ""; position: absolute; left: 20px; top: 0; width: 5px; height: 5px; border-radius: 2px; background: #1ee01e; }
.list-pane .mark::after { left: 10px; }

/* scrollbars */
.scroll { width: 16px; flex: none; display: flex; flex-direction: column; background: #f1f1f1; }
.scroll .up, .scroll .down { height: 18px; flex: none; display: flex; justify-content: center; align-items: center; }
.scroll .up::before, .scroll .down::before { content: ""; width: 7px; height: 4px; background: #444; clip-path: polygon(50% 0, 100% 100%, 0 100%); }
.scroll .down::before { transform: rotate(180deg); }
.track { flex: 1; min-height: 0; }
.thumb {
  display: flex;
  align-items: center;
  justify-content: center;
  border: 1px solid #979797;
  border-radius: 2px;
  background: linear-gradient(90deg, #f5f5f5, #e6e6e6 50%, #cdcdcd 55%, #dedede);
}
.grip { width: 7px; height: 7px; background: repeating-linear-gradient(#555 0 1px, transparent 1px 3px); }
.tree-thumb { height: 58%; }
.list-thumb { height: 60%; }
.rem-thumb { height: 27%; }

/* side icons */
.side { width: 35px; flex: none; padding: 3px 5px 0 7px; display: flex; flex-direction: column; align-items: center; }
.side button, .side svg { width: 23px; height: 23px; display: block; }
.side .short { height: 20px; margin-top: 4px; }
.side .short svg { height: 17px; }
.side hr { width: 100%; border: 0; border-top: 1px solid #8a8a8a; margin: 2px 0; }

/* desktop */
.lower { flex: 174 0 0; min-height: 0; display: flex; border-top: 1px solid #6b6b6b; border-bottom: 2px solid #fff; }
.desk { flex: 1; min-width: 0; display: flex; flex-direction: column; padding-bottom: 10px; }
.desk h2 {
  flex: none;
  height: 18px;
  margin: 0 0 6px 10px;
  padding-left: 10px;
  background: #4b8ff5;
  color: #fff;
  font: bold 13px/17px "DejaVu Sans", Verdana, sans-serif;
}
.desk-body { flex: 1; min-height: 0; display: flex; border-top: 1px solid #6b6b6b; }
.desk-tabs { width: 30px; flex: none; display: flex; flex-direction: column; gap: 1px; padding: 1px 0 0 2px; }
.desk-tabs button { width: 27px; height: 26px; display: flex; align-items: center; justify-content: center; flex: none; }
.desk-tabs span {
  width: 20px;
  height: 17px;
  border: 1px solid #a9a9c4;
  border-top: 3px solid #b9bbe0;
  background: linear-gradient(#ddd, #fff);
  color: #3f8f10;
  font: bold 13px/13px "Liberation Sans", Arial, sans-serif;
}
.desk-list { flex: 1; background: #fff; border: 1px solid #7b8088; padding: 0 2px; }
.side-low { width: 40px; padding: 5px 5px 0 8px; margin-right: 1px; }
.side-low hr { width: 28px; margin: 5px 0 6px; }

/* remedies */
.remedies { width: 149px; flex: none; display: flex; border: 1px solid #7b8088; border-top: 0; margin-right: 1px; margin-bottom: 1px; }
.rem-scroll { flex: 1; overflow: hidden; }
.remedies .scroll { margin-top: 25px; }
table { border-collapse: collapse; table-layout: fixed; }
th { font-weight: normal; text-align: left; background: linear-gradient(#fff 40%, #f3f4f6 42%, #f5f6f8); border-right: 1px solid #d9dade; border-bottom: 1px solid #d5d5d5; }
td { height: 16px; padding: 0; line-height: 15px; border-right: 1px solid #808080; border-bottom: 1px solid #808080; white-space: nowrap; overflow: hidden; background: #fff; }
.rem-table { width: 119px; }
.rem-table th { height: 25px; width: 30px; padding: 4px 0 0 4px; }
.rem-table .c-rem { width: 59px; }
.rem-table td + td { text-align: center; }
.rem-table td:nth-child(2) { font-weight: bold; }
.rem-table .top td { background: #b4ffb4; }

/* status bar */
.status { flex: none; height: 22px; padding: 9px 0 0 6px; display: flex; gap: 7px; overflow: hidden; white-space: nowrap; font-family: "DejaVu Sans", Verdana, sans-serif; }
.st-left { margin-right: auto; font: 12px/16px "Liberation Sans", Arial, sans-serif; }
.st-sym { color: #ff7777; }
.st-cross { color: #3a4bb0; }
.st-count { width: 111px; margin-left: -2px; padding-left: 13px; background: #5a9a6c; color: #fff; }

/* patient window */
.dialog {
  position: absolute;
  left: 317px;
  top: 160px;
  width: 843px;
  height: 429px;
  display: flex;
  flex-direction: column;
  padding: 0 6px 6px;
  border: 1px solid #1d1516;
  border-radius: 7px;
  background: linear-gradient(115deg, #d8cac6 0, #b9a29d 14%, #b39a95 35%, #a58e89 40%, #b9a29d 48%, #a8918c 60%, #c3afaa 78%, #baa39e 100%);
  box-shadow: inset 0 0 0 1px #e6dcda, 0 3px 12px 4px rgba(0, 0, 0, .65);
}
.dialog-title { height: 27px; flex: none; display: flex; align-items: center; }
.dialog-title .app-icon { margin-left: 1px; }
.dialog-caption { width: 103px; height: 19px; border: 1px solid #5b4744; border-top: 0; border-radius: 0 0 5px 5px; box-shadow: inset 0 0 0 1px #e4d8d5; overflow: hidden; }
.dialog-caption button { width: 28px; border-color: #5b4744; background: linear-gradient(#dccfcc, #b9a7a3 48%, #95827e 50%, #b5a39f); }
.dialog-caption .cap-close { background: linear-gradient(#e8a99a, #cf5b48 48%, #b22a18 50%, #d3674a); }
.dialog-body { flex: 1; min-height: 0; display: flex; flex-direction: column; padding: 12px 10px 10px 9px; border: 1px solid #5b4744; background: #efefef; }
.details { display: flex; justify-content: space-between; height: 22px; }
.details h3 { margin: 0 0 0 1px; font: bold 13px/22px "DejaVu Sans", Verdana, sans-serif; }
.pin { width: 21px; height: 22px; display: flex; align-items: center; justify-content: center; }
.pin svg { flex: none; width: 17px; height: 18px; }
.case-tools { display: flex; align-items: center; gap: 6px; height: 33px; margin: 10px 0 9px; padding-right: 2px; }
.case-tools button { display: flex; align-items: center; gap: 3px; }
.case-tools svg { width: 23px; height: 23px; }
.case-tools .rewind { margin: 0 auto 4px 3px; }
.case-tools .export { gap: 1px; }
.case-tools .sep { height: 33px; }
.cases { flex: 1; min-height: 0; border: 1px solid #7b8088; }
.cases table { width: 100%; }
.cases th { height: 25px; padding: 4px 4px 0; }
.cases td { padding-left: 1px; }
.c-date { width: 118px; }
.c-presc { width: 225px; }
.hit td { background: #e0ffe0; }
.selected td { background: #3399ff; color: #fff; }
.selected .focus { box-shadow: inset 0 0 0 2px #c06a28; }
```
FILE: script.js
```js
const chapters = [
  "Anus", "Back", "Coryza", "Cough", "Ears", "Eructation", "Eyes", "Face",
  "Fever", "Flatulence", "Genitalia Male and Female in General", "Hearing",
  "Hunger and Thirst", "Inner Chest", "Inner Head", "Larynx and Trachea",
  "Leucorrhea", "Lower Extremities", "Menses", "Mind", "Mouth", "Nausea",
  "Nose", "Outer Chest", "Outer Head"
];
const marked = ["Inner Head", "Leucorrhea"];

const remedies = {
  3: ["Merc.", "Nat-m.", "Mag-m.", "Lach.", "Lyss.", "Sil.", "Sulph.", "Zinc.",
    "Puls.", "Phos.", "Sep.", "Calc.", "Bry.", "Carb-an.", "Bell.", "Caps.",
    "Glon.", "Cann-i.", "Chin.", "Con."],
  2: ["Nit-ac.", "Kali-c.", "Nat-c.", "Nux-m.", "Nux-v.", "Nat-s.", "Spig.",
    "Olnd.", "Lyc.", "Spong.", "Petr.", "Ph-ac.", "Rat.", "Sang.", "Op.",
    "Cimic.", "Carb-v."]
};

function item(name, label, icon) {
  const cls = marked.includes(name) ? ' class="mark"' : "";
  return `<li${cls}><svg class="${icon}"><use href="#i-${icon}"/></svg>${label}</li>`;
}

document.getElementById("tree").innerHTML =
  chapters.map(c => item(c, c, "page")).join("");

// the list has one more chapter in view than the tree
document.getElementById("chapters").innerHTML =
  [...chapters, "Outer Neck"].map(c => item(c, c === "Back" ? "Back [122]" : c, "folder")).join("");

let rows = "";
[3, 2].forEach(val => {
  remedies[val].forEach(name => {
    rows += `<tr${val === 3 ? ' class="top"' : ""}><td>${name}</td><td>1</td><td>${val}</td></tr>`;
  });
});
rows += "<tr><td></td><td></td><td></td></tr>";
document.getElementById("remedies").innerHTML = rows;
```
